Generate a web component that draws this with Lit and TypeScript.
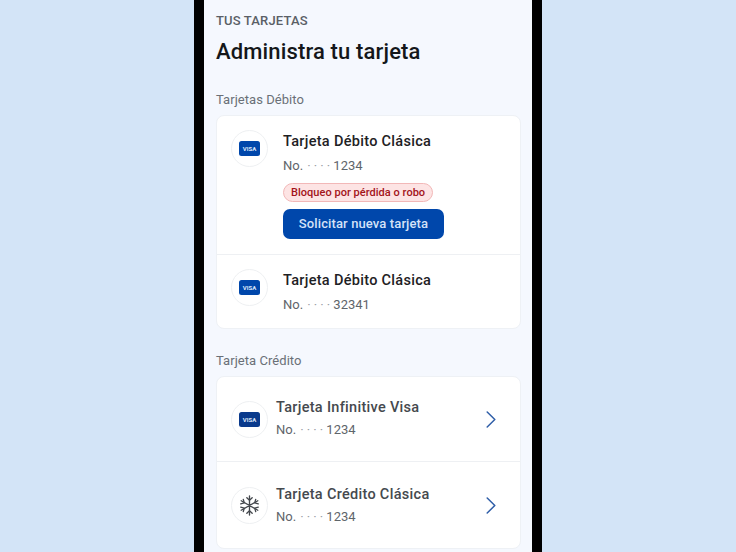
import { LitElement, html, css, svg } from "lit";
import { customElement } from "lit/decorators.js";

const visa = (cls: string) => html`<span class="visa ${cls}">VISA</span>`;
const flake = svg`<svg width="21" height="21" viewBox="0 0 22 22" fill="none" stroke="#44484d" stroke-width="1.4" stroke-linecap="round" stroke-linejoin="round">
<path d="M11 1v20M2.3 6l17.4 10M2.3 16l17.4-10"/>
<path d="M8.2 2.8 11 5.4l2.8-2.6M8.2 19.2l2.8-2.6 2.8 2.6"/>
<path d="M1.8 9.2l3.7-.9-1-3.7M17.5 4.6l-1 3.7 3.7.9M1.8 12.8l3.7.9-1 3.7M17.5 17.4l-1-3.7 3.7-.9"/></svg>`;
const chevron = svg`<svg width="10" height="17" viewBox="0 0 10 17" fill="none" stroke="#2f5ea8" stroke-width="1.5" stroke-linecap="round" stroke-linejoin="round"><path d="M1.2 1 8.8 8.5 1.2 16"/></svg>`;

@customElement("app-root")
export class AppRoot extends LitElement {
  static styles = css`
    :host { display: flex; justify-content: center; height: 552px; overflow: hidden; background: #d3e4f7; font-family: Roboto, "Noto Sans", sans-serif; color: #14171a; }
    .phone { width: 348px; height: 552px; box-sizing: border-box; border-inline: 10px solid #000; background: #f5f8fe; padding: 0 11px 0 12px; }
    .eyebrow { margin: 13px 0 0; font-size: 13px; line-height: 15px; font-weight: 500; color: #5a5f66; letter-spacing: .15px; }
    h1 { margin: 10px 0 0; font-size: 22px; line-height: 28px; font-weight: 500; color: #14171a; letter-spacing: .15px; }
    .section { margin: 26px 0 8px; font-size: 13px; line-height: 15px; color: #6a7077; letter-spacing: .05px; }
    .section.second { margin-top: 24px; }
    .card { background: #fff; border: 1px solid #eef1f5; border-radius: 8px; }
    .row { display: flex; align-items: flex-start; gap: 15px; padding: 14px 14px 15px; }
    .row + .row { border-top: 1px solid #eef0f3; }
    .row.center { align-items: center; gap: 8px; padding: 0 24px 0 14px; height: 84px; }
    .row.center + .row.center { height: 87px; box-sizing: border-box; }
    .circle { width: 37px; height: 37px; flex: none; border: 1px solid #eef0f2; border-radius: 50%; box-sizing: border-box; display: flex; align-items: center; justify-content: center; background: #fff; }
    .visa { width: 21px; height: 15px; border-radius: 2.5px; display: flex; align-items: center; justify-content: center; color: #dfe9fa; font-size: 6px; font-weight: 700; background: #0047ab; }
    .visa.dark { background: #0a3a8c; }
    .body { flex: 1; min-width: 0; padding-top: 2px; }
    .center .body { padding: 0 0 3px; }
    .center + .center .body { padding: 0 0 1px; }
    .title { font-size: 14.5px; line-height: 20px; font-weight: 500; letter-spacing: .3px; color: #1e2124; }
    .center .title { color: #45494e; }
    .num { margin-top: 6px; font-size: 13px; line-height: 16px; color: #5f656b; }
    .center .num { margin-top: 4px; }
    .dots { color: #9aa0a6; letter-spacing: 3.1px; margin: 0 0 0 1px; }
    .tag { display: block; width: fit-content; margin-top: 9px; height: 19px; box-sizing: border-box; padding: 0 7px; border: 1px solid #f2b8b8; border-radius: 10px; background: #fde4e4; color: #a3141a; font-size: 11px; line-height: 17px; font-weight: 500; letter-spacing: .03px; }
    button { display: block; margin-top: 7px; width: 161px; height: 30px; border: 0; border-radius: 7px; background: #0047ab; color: #d5e2f8; font: 500 13px/30px Roboto, sans-serif; letter-spacing: .12px; padding: 0; }
  `;

  private item(t: string, n: string) {
    return html`<div class="row center">
      <div class="circle">${t.includes("Clásica") ? flake : visa("dark")}</div>
      <div class="body"><div class="title">${t}</div><div class="num">No. <span class="dots">····</span>${n}</div></div>
      ${chevron}
    </div>`;
  }

  render() {
    return html`<main class="phone">
      <p class="eyebrow">TUS TARJETAS</p>
      <h1>Administra tu tarjeta</h1>
      <p class="section">Tarjetas Débito</p>
      <section class="card">
        <div class="row">
          <div class="circle">${visa("")}</div>
          <div class="body">
            <div class="title">Tarjeta Débito Clásica</div>
            <div class="num">No. <span class="dots">····</span>1234</div>
            <span class="tag">Bloqueo por pérdida o robo</span>
            <button>Solicitar nueva tarjeta</button>
          </div>
        </div>
        <div class="row">
          <div class="circle">${visa("")}</div>
          <div class="body">
            <div class="title">Tarjeta Débito Clásica</div>
            <div class="num">No. <span class="dots">····</span>32341</div>
          </div>
        </div>
      </section>
      <p class="section second">Tarjeta Crédito</p>
      <section class="card">
        ${this.item("Tarjeta Infinitive Visa", "1234")}
        ${this.item("Tarjeta Crédito Clásica", "1234")}
      </section>
    </main>`;
  }
}
